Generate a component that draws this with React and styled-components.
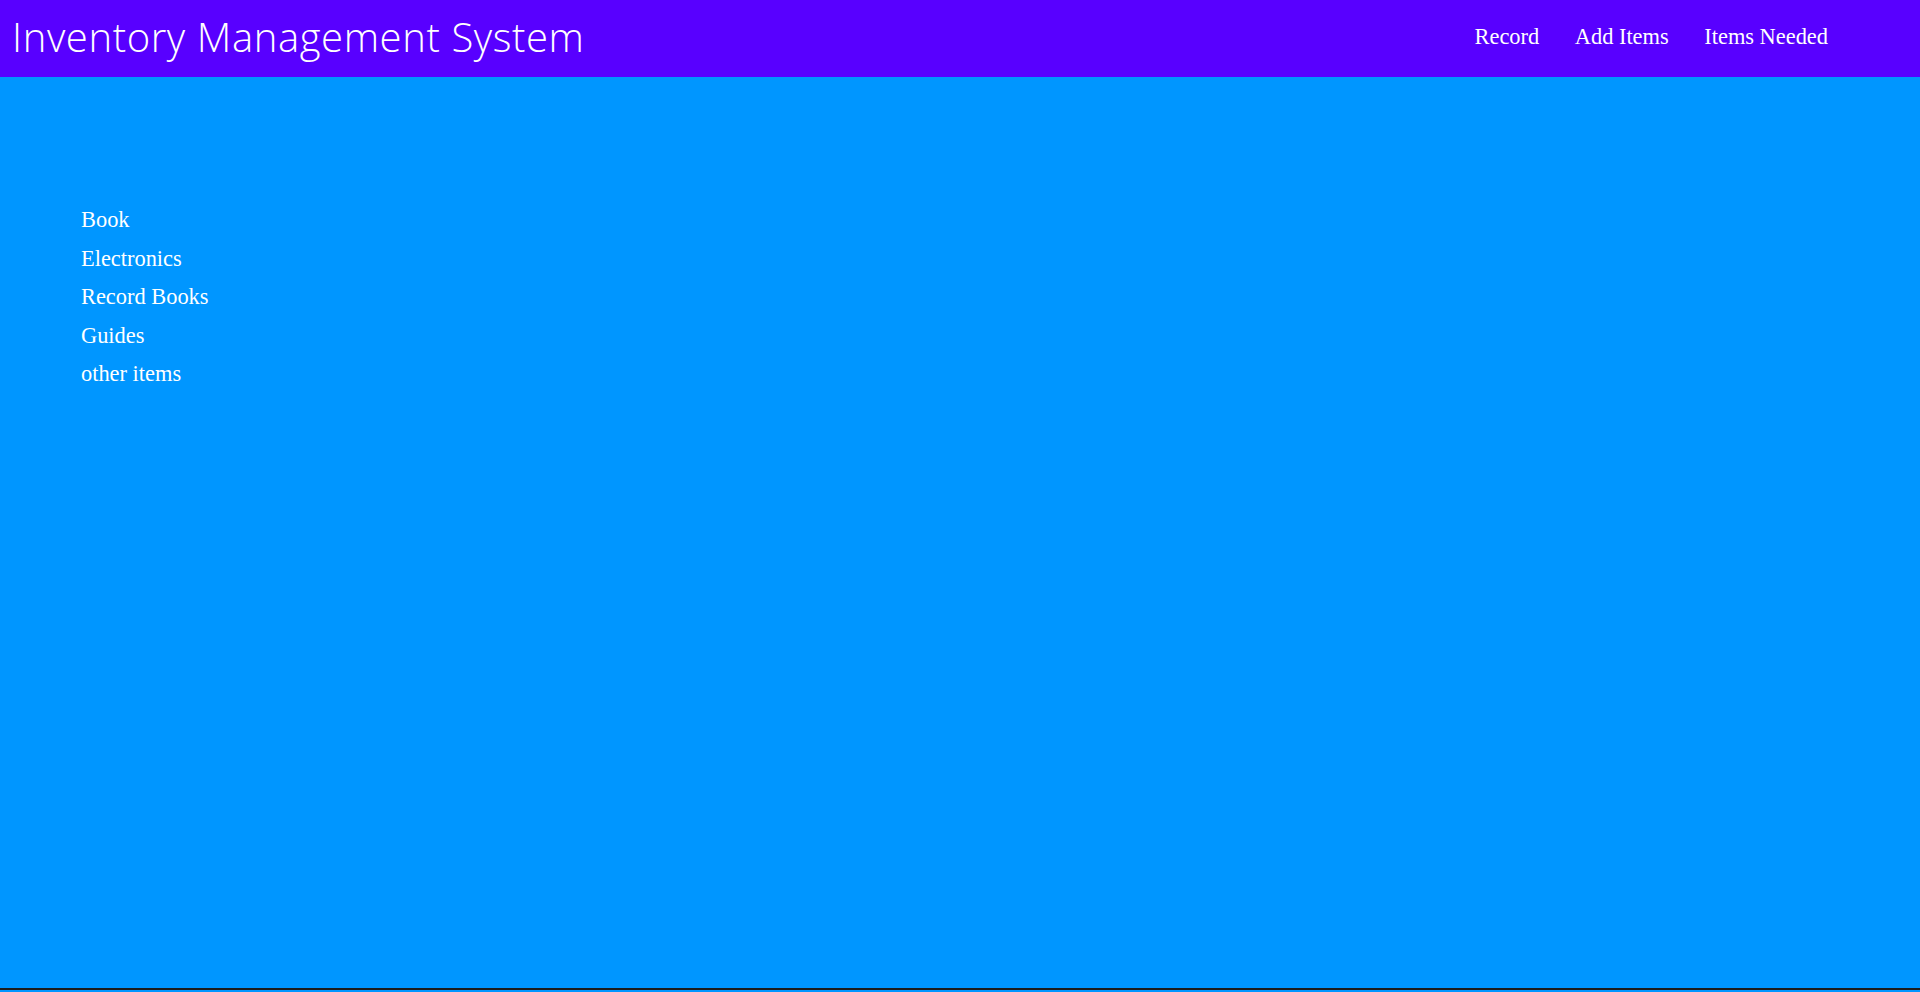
import React from "react";
import styled, { createGlobalStyle } from "styled-components";

const GlobalStyle = createGlobalStyle`
  html, body {
    margin: 0;
    padding: 0;
  }
  body {
    font-family: "Liberation Serif", "Times New Roman", serif;
    background: #0096ff;
  }
`;

const Header = styled.header`
  height: 77px;
  background-color: #5800ff;
  display: flex;
  align-items: center;
  justify-content: space-between;
  padding: 0 92px 0 12px;
  box-sizing: border-box;
`;

const Title = styled.h1`
  margin: 0 0 4px;
  font-family: "Open Sans", "Lato", sans-serif;
  font-weight: 300;
  font-size: 40px;
  color: #fff;
  letter-spacing: 0.6px;
`;

const Nav = styled.nav`
  display: flex;
  gap: 35.6px;
  padding-bottom: 3px;
`;

const NavLink = styled.a`
  color: #fff;
  text-decoration: none;
  font-size: 22.4px;
`;

const Main = styled.main`
  height: 913px;
  background-color: #0096ff;
  border-bottom: 2px solid #1c1c1c;
  padding: 124px 0 0 81px;
  box-sizing: border-box;
`;

const CategoryList = styled.ul`
  list-style: none;
  margin: 0;
  padding: 0;
`;

const Category = styled.li`
  color: #fff;
  font-size: 22.4px;
  line-height: 38.5px;
`;

const navItems = ["Record", "Add Items", "Items Needed"];
const categories = ["Book", "Electronics", "Record Books", "Guides", "other items"];

const App = () => {
  return (
    <>
      <GlobalStyle />
      <Header>
        <Title>Inventory Management System</Title>
        <Nav>
          {navItems.map((item) => (
            <NavLink key={item} href="#">
              {item}
            </NavLink>
          ))}
        </Nav>
      </Header>
      <Main>
        <CategoryList>
          {categories.map((c) => (
            <Category key={c}>{c}</Category>
          ))}
        </CategoryList>
      </Main>
    </>
  );
};

export default App;
